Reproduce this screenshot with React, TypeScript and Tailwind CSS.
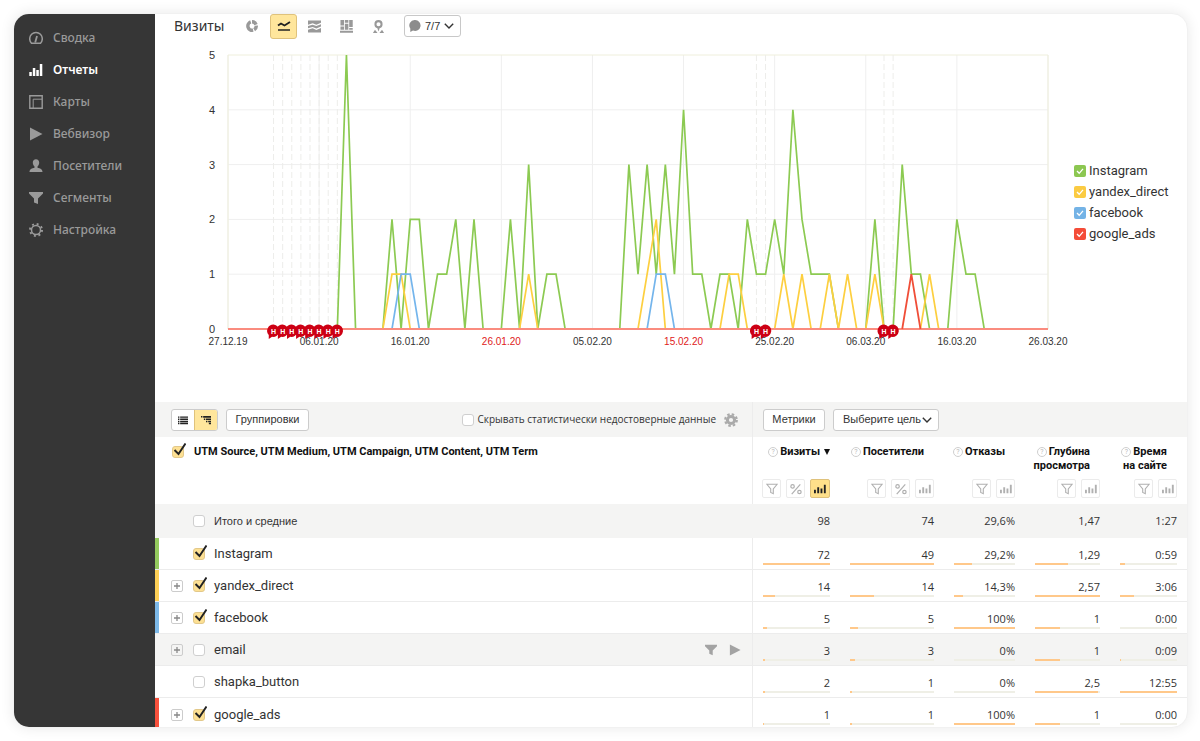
import { useState } from "react";
import type { ReactNode } from "react";

type Point = [day: number, value: number];

const ORIGIN_X = 33;
const ORIGIN_Y = 289;
const DAYS = 90;
const PLOT_WIDTH = 820;
const PLOT_HEIGHT = 274;

const px = (day: number) => ORIGIN_X + (day * PLOT_WIDTH) / DAYS;
const py = (value: number) => ORIGIN_Y - (value * PLOT_HEIGHT) / 5;

const lines: { color: string; points: Point[] }[] = [
  {
    color: "#8cca52",
    points: [
      [0, 0], [12, 0], [13, 5], [14, 0], [17, 0], [18, 2], [19, 0], [20, 2], [21, 2], [22, 0],
      [23, 1], [24, 1], [25, 2], [26, 0], [27, 2], [28, 0], [30, 0], [31, 2], [32, 0], [33, 3],
      [34, 0], [35, 1], [36, 1], [37, 0], [43, 0], [44, 3], [45, 1], [46, 3], [47, 1], [48, 3],
      [49, 1], [50, 4], [51, 1], [52, 1], [53, 0], [54, 1], [55, 1], [56, 0], [57, 2], [58, 1],
      [59, 1], [60, 2], [61, 1], [62, 4], [63, 2], [64, 1], [66, 1], [67, 0], [70, 0], [71, 2],
      [72, 0], [73, 0], [74, 3], [75, 1], [76, 1], [77, 0], [79, 0], [80, 2], [81, 1], [82, 1],
      [83, 0], [90, 0],
    ],
  },
  {
    color: "#fdcf3f",
    points: [
      [0, 0], [17, 0], [18, 1], [19, 1], [20, 0], [32, 0], [33, 1], [34, 0], [45, 0], [47, 2],
      [48, 0], [54, 0], [55, 1], [56, 1], [57, 0], [60, 0], [61, 1], [62, 0], [63, 1], [64, 0],
      [65, 0], [66, 1], [67, 0], [68, 1], [69, 0], [70, 0], [71, 1], [72, 0], [76, 0], [77, 1],
      [78, 0], [90, 0],
    ],
  },
  {
    color: "#74b5ec",
    points: [[0, 0], [18, 0], [19, 1], [20, 1], [21, 0], [46, 0], [47, 1], [48, 1], [49, 0], [90, 0]],
  },
];

const dates = [
  { label: "27.12.19" },
  { label: "06.01.20" },
  { label: "16.01.20" },
  { label: "26.01.20", holiday: true },
  { label: "05.02.20" },
  { label: "15.02.20", holiday: true },
  { label: "25.02.20" },
  { label: "06.03.20" },
  { label: "16.03.20" },
  { label: "26.03.20" },
];

const notes = [5, 6, 7, 8, 9, 10, 11, 12, 58, 59, 72, 73];

const legend = [
  { name: "Instagram", color: "bg-[#8cc751]" },
  { name: "yandex_direct", color: "bg-[#fbcb42]" },
  { name: "facebook", color: "bg-[#74b3e6]" },
  { name: "google_ads", color: "bg-[#f44c38]" },
];

const rows = [
  { name: "Instagram", mark: "border-l-[#94ca5e]", checked: true, expand: false, values: ["72", "49", "29,2%", "1,29", "0:59"], bars: [100, 100, 29, 50, 8] },
  { name: "yandex_direct", mark: "border-l-[#fdcf56]", checked: true, expand: true, values: ["14", "14", "14,3%", "2,57", "3:06"], bars: [19, 29, 14, 100, 24] },
  { name: "facebook", mark: "border-l-[#7db9e8]", checked: true, expand: true, values: ["5", "5", "100%", "1", "0:00"], bars: [7, 10, 100, 39, 0] },
  { name: "email", mark: "border-l-transparent", checked: false, expand: true, values: ["3", "3", "0%", "1", "0:09"], bars: [4, 6, 0, 39, 1] },
  { name: "shapka_button", mark: "border-l-transparent", checked: false, expand: false, values: ["2", "1", "0%", "2,5", "12:55"], bars: [3, 2, 0, 97, 100] },
  { name: "google_ads", mark: "border-l-[#f8513d]", checked: true, expand: true, values: ["1", "1", "100%", "1", "0:00"], bars: [1, 2, 100, 39, 0] },
];

const columns = [
  { lines: ["Визиты"], percent: true, sorted: true },
  { lines: ["Посетители"], percent: true },
  { lines: ["Отказы"] },
  { lines: ["Глубина", "просмотра"] },
  { lines: ["Время", "на сайте"] },
];

const totals = ["98", "74", "29,6%", "1,47", "1:27"];

function Icon({ children, className = "size-3.5" }: { children: ReactNode; className?: string }) {
  return (
    <svg viewBox="0 0 14 14" className={`shrink-0 ${className}`} fill="currentColor" aria-hidden="true">
      {children}
    </svg>
  );
}

const funnel = <path d="M0 1h14v1.5L9 7.5V13l-4-1.500V7.500L0 2.500z" />;
const play = <path d="M1 .5 13.500 7 1 13.500z" />;

const menu: { label: string; active?: boolean; icon: ReactNode }[] = [
  {
    label: "Сводка",
    icon: (
      <g fill="none" stroke="currentColor" strokeWidth="1.500">
        <path d="M2.500 12.200a6.300 6.300 0 1 1 9 0z" strokeLinejoin="round" />
        <path d="M6.200 11.500 8 5" strokeWidth="1.800" />
      </g>
    ),
  },
  {
    label: "Отчеты",
    active: true,
    icon: <path d="M.3 9h2.500v4H.3zM3.800 5h2.500v8H3.800zM7.300 7h2.500v6H7.300zM10.800 1h2.500v12h-2.500z" />,
  },
  {
    label: "Карты",
    icon: (
      <g fill="none" stroke="currentColor" strokeWidth="1.400">
        <path d="M.8 .8h12.400v12.400H.8z" />
        <path d="M4.200 13V4.200H13" strokeWidth="1" />
      </g>
    ),
  },
  { label: "Вебвизор", icon: play },
  {
    label: "Посетители",
    icon: <path d="M7 .3c2 0 3.200 1.300 3.200 3.200 0 1.800-.7 3-1.700 3.900v1.300c2.500.5 5 1.200 5 4.300H.5c0-3.100 2.500-3.800 5-4.300V7.400c-1-.9-1.700-2.100-1.700-3.900C3.800 1.600 5 .3 7 .3z" />,
  },
  { label: "Сегменты", icon: funnel },
  {
    label: "Настройка",
    icon: (
      <g fill="none" stroke="currentColor">
        <circle cx="7" cy="7" r="4.500" strokeWidth="1.500" />
        <circle cx="7" cy="7" r="6" strokeWidth="2" strokeDasharray="1.900 2.812" />
      </g>
    ),
  },
];

function Sidebar() {
  return (
    <nav className="w-[141px] shrink-0 bg-[#363636] pt-2">
      {menu.map((item) => (
        <a
          key={item.label}
          href="#"
          className={`flex h-8 items-center gap-2.5 pl-[15px] font-['Noto_Sans',sans-serif] text-[12px] ${item.active ? "font-semibold text-white" : "font-medium text-[#9a9a9a]"}`}
        >
          <Icon>{item.icon}</Icon>
          {item.label}
        </a>
      ))}
    </nav>
  );
}

function Tick({ label, defaultChecked = false }: { label: string; defaultChecked?: boolean }) {
  const [checked, setChecked] = useState(defaultChecked);
  return (
    <span className="relative flex size-3 shrink-0">
      <input
        type="checkbox"
        aria-label={label}
        checked={checked}
        onChange={() => setChecked(!checked)}
        className="size-3 appearance-none rounded-[3px] border border-[#cfcfcf] bg-white checked:border-[#e2c88a] checked:bg-[#fde093]"
      />
      {checked && (
        <svg viewBox="0 0 14 14" className="pointer-events-none absolute -top-1 left-0 size-3.5" aria-hidden="true">
          <path d="M2.500 8l4 4L13.500 1.500" fill="none" stroke="#222" strokeWidth="2" />
        </svg>
      )}
    </span>
  );
}

function Chevron() {
  return (
    <svg viewBox="0 0 10 6" className="h-1.5 w-2.5 shrink-0" fill="none" stroke="#333" strokeWidth="1.400" aria-hidden="true">
      <path d="M.8 .8 5 5 9.200 .8" />
    </svg>
  );
}

function ChartToolbar() {
  return (
    <div className="flex h-6 items-center pl-[19px]">
      <h1 className="w-[72px] font-['Noto_Sans',sans-serif] text-[14px] leading-5 text-[#333]">Визиты</h1>
      <div className="flex items-center text-[#999]">
        <button aria-label="Круговая диаграмма" className="mr-3 size-3">
          <Icon className="size-3">
            <g fill="none" stroke="currentColor" strokeWidth="4">
              <path d="M5.500 2.250A5 5 0 0 0 8.300 11.830" />
              <path d="M7 2a5 5 0 0 1 4.700 3.300" />
              <path d="M11.950 6.500a5 5 0 0 1-2.400 4.800" />
            </g>
          </Icon>
        </button>
        <button aria-label="Линии" className="mr-[11px] flex h-[25px] w-[27px] items-center justify-center rounded-[3px] border border-[#dfc27c] bg-[#ffe69c] text-[#222]">
          <Icon>
            <g fill="none" stroke="currentColor" strokeWidth="1.500">
              <path d="M1 6.500 4 4.500l3.500 2L13 3" strokeWidth="1.900" />
              <path d="M1 11h12" />
            </g>
          </Icon>
        </button>
        <button aria-label="Области" className="mr-[19px] size-[13px]">
          <Icon className="size-[13px]">
            <path d="M0 .5h14V3L9 5 5 3.500 0 5zM0 6.500 5 5l4 1.500 5-2v2.500L9 9.200 5 7.500 0 9zM0 10.500 5 9l4 1.700 5-2V13.500H0z" />
          </Icon>
        </button>
        <button aria-label="Колонки" className="mr-[19px] size-[13px]">
          <Icon className="size-[13px]">
            <path d="M.5 0h3.800v6H.5zM.5 7h3.800v3.500H.5zM5.200 0H9v3H5.200zM5.200 4H9v6.500H5.200zM9.900 0h3.800v7.500H9.900zM9.900 8.500h3.800v2H9.900zM0 11.700h14v2H0z" />
          </Icon>
        </button>
        <button aria-label="Карта" className="mr-[19px] size-[13px]">
          <Icon className="size-[13px]">
            <circle cx="7" cy="4.500" r="3.300" fill="none" stroke="currentColor" strokeWidth="2.200" />
            <path d="M5.500 8h3L7 12.500zM3.200 10.500 1 14h5zM10.800 10.500 13 14H8z" />
          </Icon>
        </button>
        <button className="flex h-[22px] items-center gap-1 rounded-[3px] border border-[#c8c8c8] bg-white pr-1.5 pl-1 font-['Liberation_Sans',Arial,sans-serif] text-[11px] text-[#333]">
          <svg viewBox="0 0 12 12" className="size-3" fill="#8c8c8c" aria-hidden="true">
            <path d="M6 0a5.500 5.500 0 1 1-2 10.600L1.300 12V8.600A5.500 5.500 0 0 1 6 0z" />
          </svg>
          7/7
          <Chevron />
        </button>
      </div>
    </div>
  );
}

function Chart() {
  return (
    <svg viewBox="0 0 879 315" className="min-w-0 flex-1" role="img" aria-label="Визиты по дням">
      {[1, 2, 3, 4].map((v) => (
        <path key={v} d={`M${px(0)} ${py(v)}H${px(DAYS)}`} stroke="#efefef" />
      ))}
      {dates.map((date, i) => (
        <path key={date.label} d={`M${px(i * 10)} ${py(5)}V${py(0)}`} stroke="#efefef" />
      ))}
      <path d={`M${px(0)} ${py(0)}V${py(5)}H${px(DAYS)}V${py(0)}`} fill="none" stroke="#efefdc" />
      {notes.map((day) => (
        <path key={day} d={`M${px(day)} ${py(5)}V${py(0)}`} stroke="#ededea" strokeDasharray="6 3" />
      ))}
      {lines.map((line) => (
        <polyline
          key={line.color}
          points={line.points.map(([day, value]) => `${px(day)},${py(value)}`).join(" ")}
          fill="none"
          stroke={line.color}
          strokeWidth="1.700"
        />
      ))}
      <path d={`M${px(0)} ${py(0)}H${px(DAYS)}`} stroke="#fa8c7f" strokeWidth="2" />
      <path d={`M${px(74)} ${py(0)}L${px(75)} ${py(1)}L${px(76)} ${py(0)}`} fill="none" stroke="#f04e38" strokeWidth="1.800" />
      <g fontFamily="'Liberation Sans', Arial, sans-serif" fontSize="10" fill="#333">
        {[0, 1, 2, 3, 4, 5].map((v) => (
          <text key={v} x="20" y={py(v) + 4} textAnchor="end" fontSize="11">
            {v}
          </text>
        ))}
        {dates.map((date, i) => (
          <text key={date.label} x={px(i * 10)} y="305" textAnchor="middle" fill={date.holiday ? "#e02020" : "#333"}>
            {date.label}
          </text>
        ))}
      </g>
      {notes.map((day) => (
        <g key={day} transform={`translate(${px(day)} ${py(0) + 2})`}>
          <path d="M0-6.500a6.200 6.200 0 1 1-1.500 12.300L-4.800 8v-4A6.300 6.300 0 0 1 0-6.500z" fill="#cd0014" />
          <text y="3" textAnchor="middle" fill="#fff" fontSize="7" fontWeight="700" fontFamily="'Liberation Sans', Arial, sans-serif">
            Н
          </text>
        </g>
      ))}
    </svg>
  );
}

function Legend() {
  return (
    <ul className="flex w-[113px] shrink-0 flex-col gap-px pt-[121px] font-[Roboto,sans-serif] text-[13px] text-[#333]">
      {legend.map((item) => (
        <li key={item.name}>
          <label className="flex h-5 items-center gap-[3px]">
            <span className="relative flex size-3">
              <input type="checkbox" defaultChecked className={`size-3 appearance-none rounded-[2px] ${item.color}`} />
              <svg viewBox="0 0 12 12" className="pointer-events-none absolute inset-0 size-3" aria-hidden="true">
                <path d="M3 6l2.200 2.300L9 3.800" fill="none" stroke="#fff" strokeWidth="1.300" />
              </svg>
            </span>
            {item.name}
          </label>
        </li>
      ))}
    </ul>
  );
}

const buttonClass = "h-[22px] rounded-[3px] border border-[#cccccc] bg-white font-['Liberation_Sans',Arial,sans-serif] text-[11px] text-[#333]";

function TableToolbar() {
  return (
    <div className="flex h-[35px] bg-[#f4f4f3]">
      <div className="flex flex-1 items-center pr-[14px] pl-4">
        <div className="flex h-[22px] w-[47px] overflow-hidden rounded-[3px] border border-[#cccccc] bg-white text-[#222]">
          <button aria-label="Список" className="flex flex-1 items-center justify-center">
            <Icon className="size-2.5">
              <path d="M0 2h2v2H0zM3 2h11v2H3zM0 5h2v2H0zM3 5h11v2H3zM0 8h2v2H0zM3 8h11v2H3zM0 11h2v2H0zM3 11h11v2H3z" />
            </Icon>
          </button>
          <button aria-label="Дерево" className="flex flex-1 items-center justify-center border-l border-[#dfc27c] bg-[#ffe69c]">
            <Icon className="size-2.5">
              <path d="M0 1.500h2v2H0zM3 1.500h11v2.500H3zM4 5h2v2H4zM7 5h7v2H7zM7 8h2v2H7zM10 8h4v2h-4zM11 11h3v2h-3z" />
            </Icon>
          </button>
        </div>
        <button className={`${buttonClass} ml-2 w-[83px]`}>Группировки</button>
        <label className="ml-auto flex items-center gap-[3px] font-['Open_Sans',sans-serif] text-[10px] text-[#333]">
          <input type="checkbox" className="size-3 appearance-none rounded-[3px] border border-[#cfcfcf] bg-white" />
          Скрывать статистически недостоверные данные
        </label>
        <button aria-label="Настройки" className="ml-2 text-[#aaa]">
          <Icon>
            <circle cx="7" cy="7" r="3.600" fill="none" stroke="currentColor" strokeWidth="3" />
            <circle cx="7" cy="7" r="5.800" fill="none" stroke="currentColor" strokeWidth="2.200" strokeDasharray="2.500 2.055" />
          </Icon>
        </button>
      </div>
      <div className="flex w-[435px] items-center gap-2 border-l border-[#ececec] pl-[10px]">
        <button className={`${buttonClass} w-[62px]`}>Метрики</button>
        <div className="relative flex">
          <select aria-label="Цель" className={`${buttonClass} w-[106px] appearance-none pl-[9px]`}>
            <option>Выберите цель</option>
          </select>
          <span className="pointer-events-none absolute top-2 right-[7px]">
            <Chevron />
          </span>
        </div>
      </div>
    </div>
  );
}

function Tool({ label, active, children }: { label: string; active?: boolean; children: ReactNode }) {
  return (
    <button
      aria-label={label}
      className={`flex h-[19px] items-center justify-center rounded-[2px] border ${active ? "w-5 border-[#dfc27c] bg-[#ffe08a] text-[#222]" : "w-[19px] border-[#ebebeb] bg-white text-[#b0b0b0]"}`}
    >
      <Icon className="size-3">{children}</Icon>
    </button>
  );
}

function ReportTable() {
  return (
    <table className="w-full table-fixed border-collapse font-['Open_Sans',sans-serif] text-[11px] text-[#333]">
      <colgroup>
        <col />
        <col className="w-[88px]" />
        <col className="w-[104px]" />
        <col className="w-[81px]" />
        <col className="w-[85px]" />
        <col className="w-[77px]" />
      </colgroup>
      <thead className="font-[Roboto,sans-serif]">
        <tr className="h-[67px] align-top">
          <th className="pt-2 pl-[17px] text-left">
            <div className="flex items-center gap-[10px] leading-[14px] text-[#111]">
              <Tick label="Выбрать все" defaultChecked />
              UTM Source, UTM Medium, UTM Campaign, UTM Content, UTM Term
            </div>
          </th>
          {columns.map((col, i) => (
            <th key={col.lines[0]} className={`pt-2 pr-[10px] text-right leading-[14px] text-[#111] ${i === 0 ? "border-l border-[#ececec]" : ""}`}>
              <div className={`h-7 whitespace-nowrap ${col.sorted ? "" : "pr-[10px]"}`}>
                <div className="flex items-center justify-end gap-0.5">
                  <span className="flex size-[10px] items-center justify-center rounded-full border border-[#cfcfcf] text-[7px] font-normal text-[#bbb]">?</span>
                  {col.lines[0]}
                  {col.sorted && (
                    <svg viewBox="0 0 6 6" className="ml-0.5 size-1.5" aria-hidden="true">
                      <path d="M0 0h6L3 6z" fill="#111" />
                    </svg>
                  )}
                </div>
                {col.lines[1]}
              </div>
              <div className="mt-1.5 flex justify-end gap-[5px]">
                <Tool label="Фильтр">
                  <path d="M1 1.500h12L8.500 7v5.500L5.500 11V7z" fill="none" stroke="currentColor" strokeWidth="1.300" />
                </Tool>
                {col.percent && (
                  <Tool label="Проценты">
                    <g fill="none" stroke="currentColor" strokeWidth="1.400">
                      <circle cx="3" cy="4" r="2" />
                      <circle cx="11" cy="10.500" r="2" />
                      <path d="M12 1.500 2 13" />
                    </g>
                  </Tool>
                )}
                <Tool label="График" active={col.sorted}>
                  <path d="M0 8h2.200v4H0zM3.800 5h2.200v7H3.800zM7.600 6.500h2.200V12H7.600zM11.500 2h2.200v10h-2.200z" />
                </Tool>
              </div>
            </th>
          ))}
        </tr>
      </thead>
      <tbody>
        <tr className="h-[34px] bg-[#f4f4f3]">
          <td className="pl-[38px]">
            <label className="flex items-center gap-[9px] font-['Liberation_Sans',Arial,sans-serif]">
              <Tick label="Итого и средние" />
              Итого и средние
            </label>
          </td>
          {totals.map((value) => (
            <td key={value} className="pr-[10px] text-right">
              {value}
            </td>
          ))}
        </tr>
        {rows.map((row) => (
          <tr key={row.name} className={`group border-b border-[#ececec] align-top last:border-0 ${row.name === "email" ? "bg-[#f4f4f3]" : ""}`}>
            <td className="p-0">
              <div className={`flex h-[31px] items-center border-l-4 pr-[11px] pl-3 group-last:h-[29px] group-last:pt-1 ${row.mark}`}>
                <span className="flex w-[22px]">
                  {row.expand && (
                    <button aria-label={`Раскрыть ${row.name}`} className="flex size-3 items-center justify-center rounded-[2px] border border-[#cccccc] text-[#888]">
                      <Icon className="size-1.5">
                        <path d="M5.500 0h3v5.500H14v3H8.500V14h-3V8.500H0v-3h5.500z" />
                      </Icon>
                    </button>
                  )}
                </span>
                <Tick label={row.name} defaultChecked={row.checked} />
                <span className="ml-[9px] font-[Roboto,sans-serif] text-[13px] leading-4">{row.name}</span>
                {row.name === "email" && (
                  <span className="ml-auto flex gap-3 text-[#a3a3a3]">
                    <button aria-label="Сегмент">
                      <Icon className="size-3">{funnel}</Icon>
                    </button>
                    <button aria-label="Вебвизор">
                      <Icon className="size-3">{play}</Icon>
                    </button>
                  </span>
                )}
              </div>
            </td>
            {row.values.map((value, i) => (
              <td key={i} className={`px-[10px] pt-[9px] text-right ${i === 0 ? "border-l border-[#ececec]" : ""}`}>
                <div className="leading-4">{value}</div>
                <div className="h-0.5 bg-[#efefe6]">
                  <div className="h-0.5 bg-[#ffc88a]" style={{ width: `${row.bars[i]}%` }} />
                </div>
              </td>
            ))}
          </tr>
        ))}
      </tbody>
    </table>
  );
}

export default function App() {
  return (
    <div className="bg-white pt-[13px] pr-3 pb-[14px] pl-[13px]">
      <div className="flex overflow-hidden rounded-2xl border border-[#f1f1f1] bg-white shadow-[0_0_14px_rgba(0,0,0,0.09)]">
        <Sidebar />
        <main className="min-w-0 flex-1">
          <ChartToolbar />
          <div className="flex items-start pt-0.5 pb-[47px] pl-10">
            <Chart />
            <Legend />
          </div>
          <TableToolbar />
          <ReportTable />
        </main>
      </div>
    </div>
  );
}
